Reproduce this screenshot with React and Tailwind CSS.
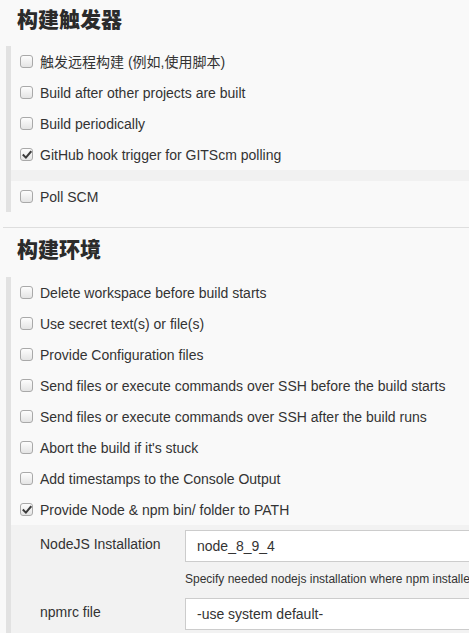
import React from "react";

function Box({ checked }) {
  return (
    <span className="relative inline-block w-[13px] h-[13px] shrink-0 rounded-[3px] border border-[#a9a9a9] bg-gradient-to-b from-[#fdfdfd] to-[#e4e4e4]">
      {checked && (
        <svg className="absolute left-[1px] top-[1px]" width="10" height="10" viewBox="0 0 10 10">
          <path d="M1.5 5.2 L3.9 7.6 L8.6 2" fill="none" stroke="#3a3a3a" strokeWidth="2" strokeLinecap="square" />
        </svg>
      )}
    </span>
  );
}

function Row({ label, checked }) {
  return (
    <div className="h-[31px] flex items-center pl-[9px] gap-[7px] whitespace-nowrap">
      <Box checked={checked} />
      <span className="text-[14px] leading-[20px]">{label}</span>
    </div>
  );
}

const cjk = "font-['Noto_Sans_CJK_SC','Liberation_Sans',sans-serif]";

export default function App() {
  return (
    <div className="w-[469px] h-[633px] overflow-hidden bg-[#f9f9f9] text-[#333] font-['Liberation_Sans','Noto_Sans_CJK_SC',sans-serif]">
      <h2 className={`pl-[17px] pt-[4px] mb-[13px] text-[21px] font-black leading-[29px] text-[#2b2b2b] ${cjk}`}>构建触发器</h2>
      <div className="ml-[6px] border-l-[5px] border-[#e2e2e2]">
        <Row label="触发远程构建 (例如,使用脚本)" />
        <Row label="Build after other projects are built" />
        <Row label="Build periodically" />
        <Row label="GitHub hook trigger for GITScm polling" checked />
        <div className="h-[11px] bg-[#f1f1f1]" />
        <Row label="Poll SCM" />
      </div>
      <div className="mt-[15px] ml-[3px] h-px bg-[#dedede]" />
      <h2 className={`pl-[17px] mt-[6px] mb-[14px] text-[21px] font-black leading-[29px] text-[#2b2b2b] ${cjk}`}>构建环境</h2>
      <div className="ml-[6px] border-l-[5px] border-[#e2e2e2]">
        <Row label="Delete workspace before build starts" />
        <Row label="Use secret text(s) or file(s)" />
        <Row label="Provide Configuration files" />
        <Row label="Send files or execute commands over SSH before the build starts" />
        <Row label="Send files or execute commands over SSH after the build runs" />
        <Row label="Abort the build if it's stuck" />
        <Row label="Add timestamps to the Console Output" />
        <Row label="Provide Node & npm bin/ folder to PATH" checked />
        <div className="bg-[#f2f2f2] pt-[5px] pb-[10px] pl-[29px] overflow-hidden">
          <div className="flex">
            <div className="w-[145px] shrink-0 pt-[4px] text-[14px] leading-[20px]">NodeJS Installation</div>
            <div className="w-[320px] shrink-0 h-[32px] border border-[#cccccc] bg-white pl-[11px] flex items-center text-[14px]">node_8_9_4</div>
          </div>
          <div className="ml-[145px] mt-[9px] h-[16px] text-[12px] leading-[16px] whitespace-nowrap text-[#333]">
            Specify needed nodejs installation where npm installed packages will be provided to the PATH
          </div>
          <div className="flex mt-[11px]">
            <div className="w-[145px] shrink-0 pt-[4px] text-[14px] leading-[20px]">npmrc file</div>
            <div className="w-[320px] shrink-0 h-[32px] border border-[#cccccc] bg-white pl-[11px] flex items-center text-[14px]">-use system default-</div>
          </div>
        </div>
      </div>
    </div>
  );
}
